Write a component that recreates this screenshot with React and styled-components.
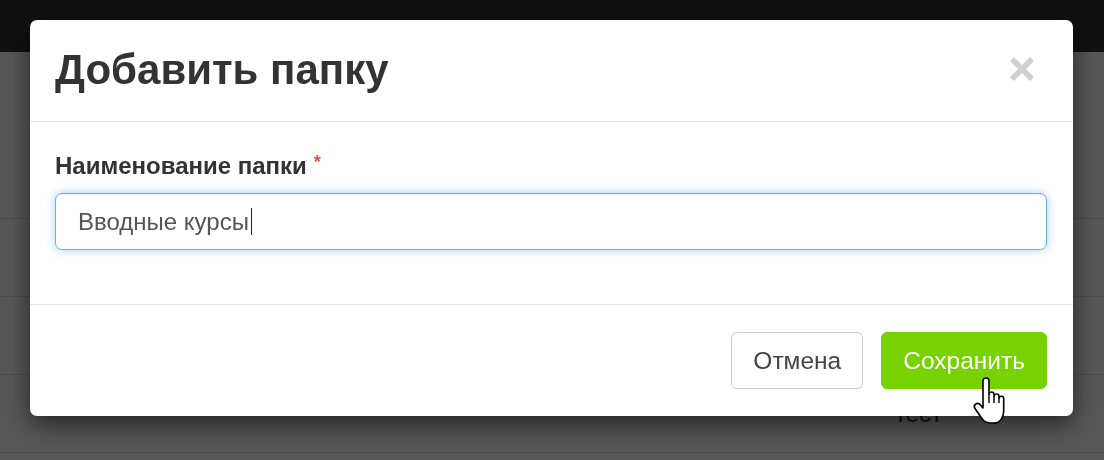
import React from "react";
import styled, { createGlobalStyle } from "styled-components";

const GlobalStyle = createGlobalStyle`
  html, body {
    margin: 0;
    padding: 0;
    height: 100%;
    overflow: hidden;
  }
  body {
    font-family: "Liberation Sans", Arial, sans-serif;
    color: #333;
    background: #fff;
  }
  * { box-sizing: border-box; }
`;

/* ---------- page behind the dialog ---------- */

const Page = styled.div`
  height: 460px;
  display: flex;
  flex-direction: column;
  background: #fff;
`;

const Navbar = styled.header`
  height: 52px;
  flex: none;
  background: #333;
`;

const PageHead = styled.div`
  height: 167px;
  flex: none;
  border-bottom: 1px solid #ddd;
`;

const Row = styled.div`
  height: 78px;
  flex: none;
  display: flex;
  align-items: center;
  border-bottom: 1px solid #ddd;
  padding-left: 895px;
  font-size: 24px;
  color: #333;
`;

/* ---------- dialog ---------- */

const Backdrop = styled.div`
  position: fixed;
  inset: 0;
  background: rgba(0, 0, 0, 0.66);
`;

const Dialog = styled.div`
  position: fixed;
  top: 20px;
  left: 30px;
  width: 1043px;
  background: #fff;
  border-radius: 7px;
  box-shadow: 0 8px 26px rgba(0, 0, 0, 0.6);
  display: flex;
  flex-direction: column;
`;

const Header = styled.div`
  display: flex;
  align-items: center;
  justify-content: space-between;
  padding: 20px 39px 21px 25px;
  border-bottom: 1px solid #e5e5e5;
`;

const Title = styled.h4`
  margin: 0;
  font-size: 42px;
  line-height: 60px;
  font-weight: 700;
  color: #333;
`;

const CloseButton = styled.button`
  border: 0;
  background: none;
  padding: 0;
  margin-top: -2px;
  width: 24px;
  height: 24px;
  display: flex;
  cursor: pointer;
`;

const Body = styled.div`
  padding: 29px 26px 54px 25px;
  display: flex;
  flex-direction: column;
`;

const Label = styled.label`
  font-size: 24px;
  line-height: 30px;
  font-weight: 700;
  color: #333;
  margin-bottom: 12px;
`;

const Required = styled.span`
  color: #e0533f;
  font-size: 18px;
  margin-left: 7px;
  vertical-align: top;
  line-height: 22px;
`;

const Field = styled.div`
  height: 57px;
  display: flex;
  align-items: center;
  padding: 0 22px;
  border: 1px solid #66afe9;
  border-radius: 7px;
  box-shadow: inset 0 1px 1px rgba(0, 0, 0, 0.075),
    0 0 10px rgba(102, 175, 233, 0.6);
  font-size: 24px;
  color: #555;
`;

const Caret = styled.span`
  width: 1px;
  height: 27px;
  background: #222;
  margin-left: 2px;
`;

const Footer = styled.div`
  display: flex;
  justify-content: flex-end;
  gap: 18px;
  padding: 27px 26px 27px 25px;
  border-top: 1px solid #e5e5e5;
`;

const Button = styled.button`
  height: 57px;
  padding: 0 21px;
  border-radius: 6px;
  font-family: inherit;
  font-size: 24.5px;
  cursor: pointer;
  border: 1px solid ${(p) => (p.$primary ? "#78d100" : "#ccc")};
  background: ${(p) => (p.$primary ? "#78d100" : "#fff")};
  color: ${(p) => (p.$primary ? "#fff" : "#444")};
`;

/* mouse pointer resting over the save button */
const Pointer = styled.svg`
  position: fixed;
  left: 972px;
  top: 377px;
  pointer-events: none;
`;

function CloseIcon() {
  return (
    <svg width="24" height="24" viewBox="0 0 24 24">
      <path d="M2 2 L22 22 M22 2 L2 22" stroke="#cfcfcf" strokeWidth="5.5" />
    </svg>
  );
}

function HandCursor() {
  return (
    <Pointer width="34" height="48" viewBox="0 0 34 48">
      <path
        d="M11 4 C11 2.3 12.3 1 14 1 C15.7 1 17 2.3 17 4 L17 17
           C17.3 15.8 18.3 15 19.5 15 C20.9 15 22 16.1 22 17.5 L22 19
           C22.3 17.8 23.3 17 24.5 17 C25.9 17 27 18.1 27 19.5 L27 21
           C27.3 20 28.2 19.3 29.3 19.3 C30.7 19.3 31.7 20.4 31.7 21.8
           L31.7 34 C31.7 40.5 28 46 22 46 L18 46 C14 46 11.5 44 9.5 41
           L3 31.5 C2 30 2.3 28 3.8 27 C5.3 26 7.3 26.5 8.3 27.8 L11 31 Z"
        fill="#fff"
        stroke="#000"
        strokeWidth="1.6"
        strokeLinejoin="round"
      />
      <path d="M17 17 L17 26 M22 19 L22 26 M27 21 L27 26" stroke="#000" strokeWidth="1.4" />
    </Pointer>
  );
}

export default function App() {
  return (
    <>
      <GlobalStyle />
      <Page>
        <Navbar />
        <PageHead />
        <Row />
        <Row />
        <Row>тест</Row>
      </Page>
      <Backdrop />
      <Dialog role="dialog" aria-labelledby="folder-title">
        <Header>
          <Title id="folder-title">Добавить папку</Title>
          <CloseButton aria-label="Закрыть">
            <CloseIcon />
          </CloseButton>
        </Header>
        <Body>
          <Label>
            Наименование папки<Required>*</Required>
          </Label>
          <Field role="textbox">
            Вводные курсы
            <Caret />
          </Field>
        </Body>
        <Footer>
          <Button>Отмена</Button>
          <Button $primary>Сохранить</Button>
        </Footer>
      </Dialog>
      <HandCursor />
    </>
  );
}
